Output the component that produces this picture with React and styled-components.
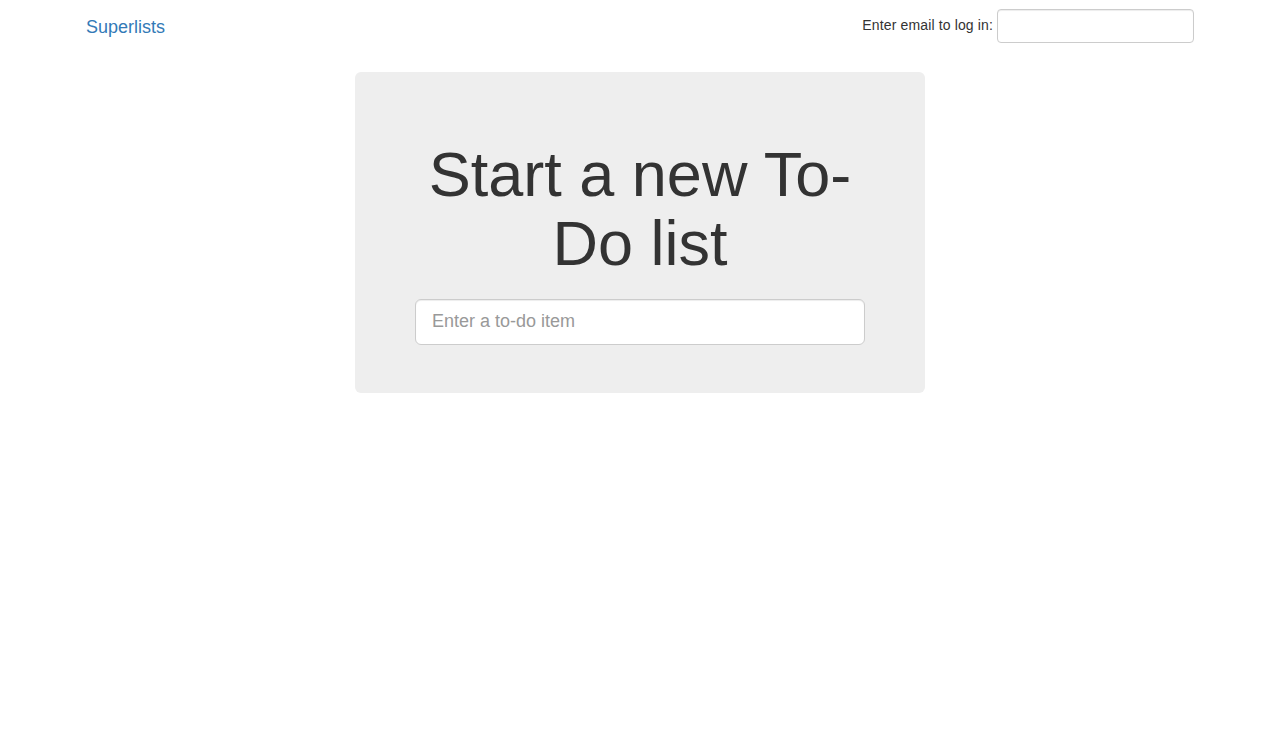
import React from 'react';
import styled, { createGlobalStyle } from 'styled-components';

const GlobalStyle = createGlobalStyle`
  html, body {
    margin: 0;
    padding: 0;
    background: #fff;
  }

  body {
    font-family: "Liberation Sans", Arial, Helvetica, sans-serif;
    font-size: 14px;
    line-height: 1.42857143;
    color: #333;
  }

  * {
    box-sizing: border-box;
  }
`;

const Navbar = styled.nav`
  min-height: 50px;
  border: 1px solid transparent;
  margin-bottom: 20px;

  .navbar-container {
    display: flex;
    align-items: flex-start;
    justify-content: space-between;
    max-width: 1170px;
    margin: 0 auto;
    padding: 0 15px;
  }

  .navbar-brand {
    display: block;
    height: 50px;
    padding: 16px 15px 14px 16px;
    font-size: 18px;
    line-height: 20px;
    color: #337ab7;
    text-decoration: none;
  }
`;

const LoginForm = styled.form`
  display: flex;
  align-items: center;
  gap: 4px;
  margin: 8px 16px 0 0;

  label {
    margin-bottom: 2px;
    font-size: 14px;
    letter-spacing: 0.14px;
    color: #333;
  }
`;

const TextInput = styled.input`
  display: block;
  width: ${(props) => (props.$large ? '100%' : '197px')};
  height: ${(props) => (props.$large ? '46px' : '34px')};
  padding: ${(props) => (props.$large ? '10px 16px' : '6px 12px')};
  font-family: inherit;
  font-size: ${(props) => (props.$large ? '18px' : '14px')};
  line-height: 1.3333333;
  color: #555;
  background-color: #fff;
  border: 1px solid #ccc;
  border-radius: ${(props) => (props.$large ? '6px' : '4px')};
  box-shadow: inset 0 1px 1px rgba(0, 0, 0, 0.075);
  outline: none;

  &::placeholder {
    color: #999;
  }
`;

const Main = styled.main`
  display: flex;
  justify-content: center;
`;

const Jumbotron = styled.div`
  width: 570px;
  padding: 48px 60px;
  background-color: #eee;
  border-radius: 6px;
  text-align: center;

  h1 {
    margin: 20px 0;
    font-size: 63px;
    font-weight: 500;
    line-height: 1.1;
    color: #333;
  }

  form {
    margin: 0;
  }
`;

const App = () => (
  <>
    <GlobalStyle />
    <Navbar>
      <div className="navbar-container">
        <a className="navbar-brand" href="/">Superlists</a>
        <LoginForm onSubmit={(e) => e.preventDefault()}>
          <label htmlFor="email">Enter email to log in:</label>
          <TextInput id="email" name="email" type="text" />
        </LoginForm>
      </div>
    </Navbar>
    <Main>
      <Jumbotron>
        <h1>Start a new To-Do list</h1>
        <form onSubmit={(e) => e.preventDefault()}>
          <TextInput $large name="item_text" placeholder="Enter a to-do item" />
        </form>
      </Jumbotron>
    </Main>
  </>
);

export default App;
